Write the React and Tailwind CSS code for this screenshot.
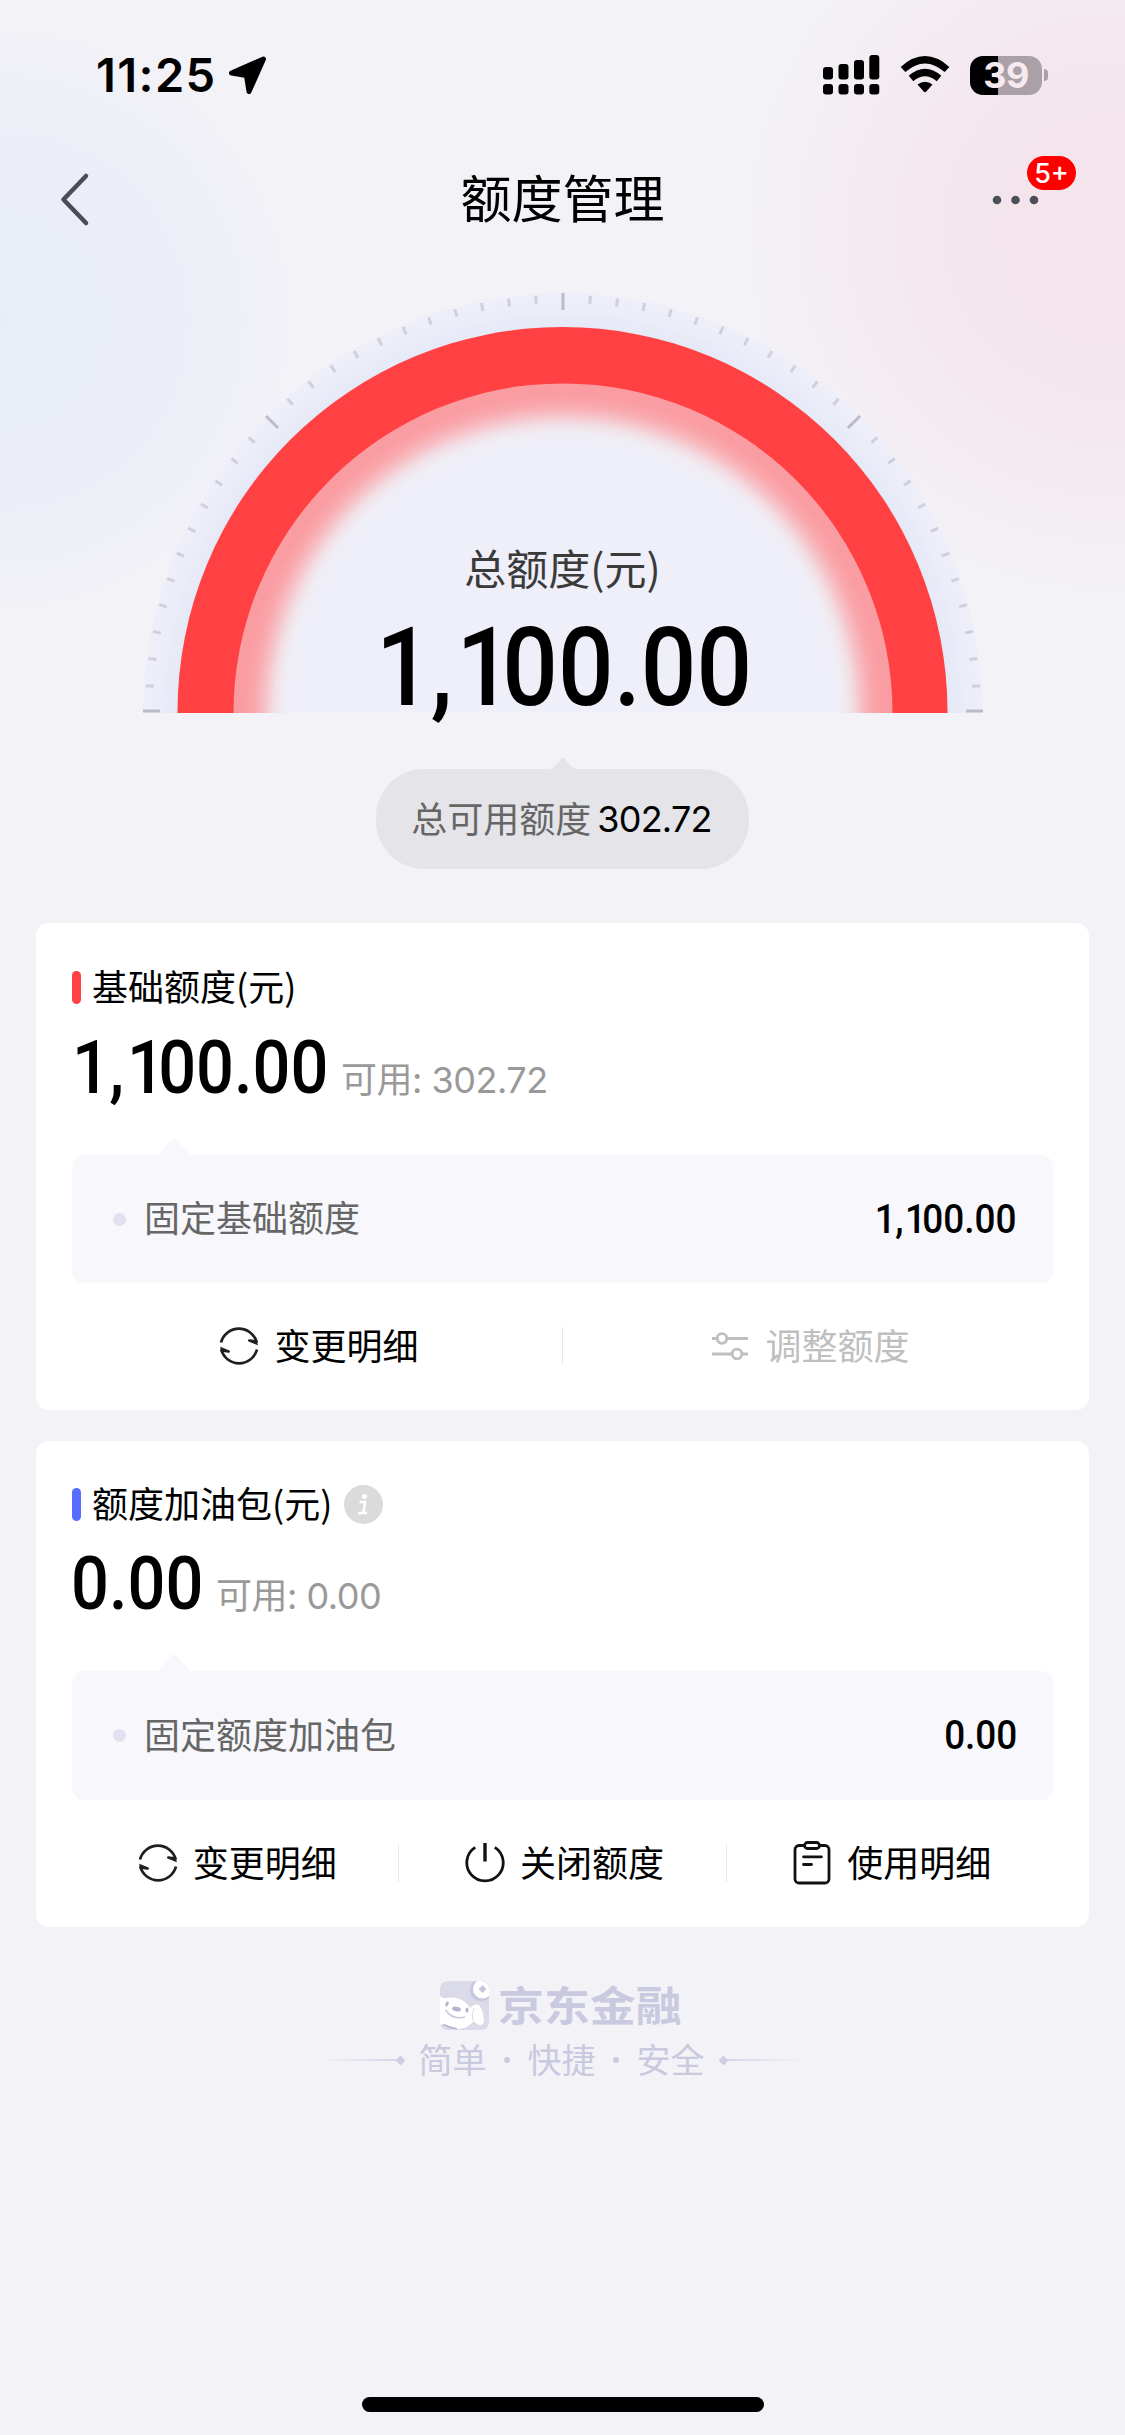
import React from 'react';

const CENTER_X = 420;
const CENTER_Y = 420;

// 49 ticks over the half circle, every 12th one is long
const ticks = Array.from({ length: 49 }, (_, i) => {
  const angle = (i * 3.75 * Math.PI) / 180;
  const major = i % 12 === 0;
  const outer = major ? 420 : 418;
  const inner = major ? 403 : 410;
  const shift = i === 0 || i === 48 ? -2 : 0;
  return {
    major,
    x1: CENTER_X - outer * Math.cos(angle),
    y1: CENTER_Y - outer * Math.sin(angle) + shift,
    x2: CENTER_X - inner * Math.cos(angle),
    y2: CENTER_Y - inner * Math.sin(angle) + shift,
  };
});

const RefreshIcon = () => (
  <svg width="40" height="42" viewBox="0 0 40 42" fill="none">
    <path d="M2 17.500A18.600 19 0 0 1 37.800 17.500" stroke="#1f1f1f" strokeWidth="2.800" />
    <path d="M38 24.500A18.600 19 0 0 1 2.200 24.500" stroke="#1f1f1f" strokeWidth="2.800" />
    <path d="M38.800 20.300L29.500 16.400c-1-.8-.4-2.400 1-2.200l7.500 1z" fill="#1f1f1f" />
    <path d="M1.200 21.700L10.500 25.600c1 .8 .4 2.400-1 2.200l-7.500-1z" fill="#1f1f1f" />
  </svg>
);

const AdjustIcon = () => (
  <svg width="40" height="40" viewBox="0 0 40 40" fill="none" stroke="#bfbfbf" strokeWidth="2.800">
    <path d="M2 12.500h5M17 12.500h21M2 28h20M32 28h6" />
    <circle cx="12" cy="12.500" r="4.800" />
    <circle cx="27" cy="28" r="4.800" />
  </svg>
);

const PowerIcon = () => (
  <svg width="40" height="40" viewBox="0 0 40 40" fill="none" stroke="#111" strokeWidth="2.800">
    <path d="M10.200 4.400A18.200 18.200 0 1 0 29.800 4.400" />
    <path d="M20 0v18.500" strokeWidth="3.400" />
  </svg>
);

const ClipboardIcon = () => (
  <svg width="40" height="44" viewBox="0 0 40 44" fill="none" stroke="#111" strokeWidth="2.800">
    <path d="M12 4.500H7a4 4 0 0 0-4 4v29.500a4 4 0 0 0 4 4h26a4 4 0 0 0 4-4V8.500a4 4 0 0 0-4-4h-5" />
    <rect x="12.500" y="1.500" width="15" height="6" rx="3" />
    <path d="M11.500 15.800h18M11.500 23.500h8" strokeLinecap="round" />
  </svg>
);

// Thousands part gets a wider comma and a tighter leading digit
const Amount = ({ value }) => {
  const [head, tail] = value.split(',');
  if (!tail) return value;
  return (
    <>
      {head}
      <span className="-ml-[0.01em] mr-[0.04em]">,</span>
      <span className="tracking-[-0.1em]">{tail[0]}</span>
      {tail.slice(1)}
    </>
  );
};

const StatusBar = () => (
  <div className="flex h-[150px] items-start justify-between pt-[55px] pl-[96px] pr-[77px]">
    <div className="flex items-center">
      <span className="w-[132px] font-[Inter] text-[47px] leading-[39px] font-semibold tracking-[1.4px] whitespace-nowrap">
        11:25
      </span>
      <svg width="38" height="38" viewBox="0 0 38 38">
        <path
          d="M35.500 3L21 35.500L18.500 19.500L3.500 17z"
          fill="#000"
          stroke="#000"
          strokeWidth="5"
          strokeLinejoin="round"
        />
      </svg>
    </div>
    <div className="flex items-center">
      <svg width="57" height="40" viewBox="0 0 57 40" fill="#000">
        <rect x="0" y="12" width="10" height="12.500" rx="3" />
        <rect x="15.500" y="9" width="10" height="15.500" rx="3" />
        <rect x="31" y="5" width="10" height="19.500" rx="3" />
        <rect x="46.300" y="0" width="10" height="24.500" rx="3" />
        <rect x="0" y="29" width="10" height="10.500" rx="3" />
        <rect x="15.500" y="29" width="10" height="10.500" rx="3" />
        <rect x="31" y="29" width="10" height="10.500" rx="3" />
        <rect x="46.300" y="29" width="10" height="10.500" rx="3" />
      </svg>
      <svg className="ml-[20px]" width="50" height="38" viewBox="0 0 50 38">
        <path d="M3 13.500Q25-6 47 13.500" fill="none" stroke="#000" strokeWidth="7" />
        <path d="M11 22.500Q25 10.500 39 22.500" fill="none" stroke="#000" strokeWidth="7" />
        <path d="M17.500 28.500Q25 23 32.500 28.500L26.500 35.300Q25 37 23.500 35.300z" fill="#000" />
      </svg>
      <div className="ml-[20px] flex h-[39px] w-[72px] items-center justify-center rounded-[13px] bg-linear-to-r from-black from-39% to-[#aaa0a7] to-39%">
        <span className="font-[Inter] text-[36px] leading-[39px] font-bold tracking-[-0.5px] text-[#f6eaf0]">
          39
        </span>
      </div>
      <div className="ml-[2px] h-[12px] w-[4px] rounded-r-full bg-[#aaa0a7]"></div>
    </div>
  </div>
);

const NavBar = () => (
  <div className="flex h-[100px] items-center justify-between pl-[59px] pr-[49px]">
    <svg className="w-[120px]" width="120" height="56" viewBox="0 0 120 56" fill="none">
      <path
        d="M27 4L4.500 27.500L27 51"
        stroke="#4a4c59"
        strokeWidth="4.500"
        strokeLinecap="round"
        strokeLinejoin="round"
      />
    </svg>
    <h1 className="pb-[8px] font-['Noto_Sans_CJK_SC',sans-serif] text-[51px] leading-[51px]">额度管理</h1>
    <div className="relative flex h-[56px] w-[130px] items-center">
      <svg width="80" height="10" viewBox="0 0 80 10" fill="#4c4f5a" className="ml-[30px]">
        <circle cx="21" cy="5" r="4.300" />
        <circle cx="39.500" cy="5" r="4.300" />
        <circle cx="58" cy="5" r="4.300" />
      </svg>
      <span className="absolute right-0 -top-[16px] flex h-[34px] w-[49px] items-center justify-center rounded-full bg-[#fe0000] font-[Inter] text-[27px] leading-none font-medium text-white">
        5+
      </span>
    </div>
  </div>
);

const Gauge = () => (
  <div className="relative mx-auto mt-[43px] h-[420px] w-[840px]">
    <svg className="absolute inset-0" width="840" height="420" viewBox="0 0 840 420">
      <defs>
        <radialGradient id="rim" gradientUnits="userSpaceOnUse" cx="420" cy="420" r="420">
          <stop offset="0.915" stopColor="#e5e9f6" />
          <stop offset="0.96" stopColor="#ebedf8" />
          <stop offset="1" stopColor="#efeff9" />
        </radialGradient>
        <radialGradient id="glow" gradientUnits="userSpaceOnUse" cx="420" cy="420" r="330">
          <stop offset="0.82" stopColor="#efeff9" />
          <stop offset="0.85" stopColor="#f0ecf3" />
          <stop offset="0.875" stopColor="#f2dfe5" />
          <stop offset="0.905" stopColor="#f6c0c6" />
          <stop offset="0.935" stopColor="#f9a8ad" />
          <stop offset="0.965" stopColor="#fa9da2" />
          <stop offset="1" stopColor="#fa9da2" />
        </radialGradient>
      </defs>
      <circle cx="420" cy="420" r="420" fill="url(#rim)" />
      <circle cx="419.500" cy="419" r="385" fill="#ff4143" />
      <circle cx="420" cy="420" r="329.500" fill="url(#glow)" />
      {ticks.map((t, i) => (
        <line
          key={i}
          x1={t.x1}
          y1={t.y1}
          x2={t.x2}
          y2={t.y2}
          stroke={t.major ? '#bcbcc8' : '#d0d0dc'}
          strokeWidth="3"
        />
      ))}
    </svg>
    <div className="relative flex flex-col pt-[252px]">
      <div className="self-center font-['Noto_Sans_CJK_SC',sans-serif] text-[42px] leading-[44px] text-[#3a3a3a]">
        总额度(元)
      </div>
      <div className="mt-[35px] ml-[233px] w-[420px] origin-left scale-x-[0.89] font-[Roboto] text-[110px] leading-[88px] font-medium">
        <Amount value="1,100.00" />
      </div>
    </div>
  </div>
);

const AvailablePill = () => (
  <div className="mt-[44px] flex flex-col items-center">
    <svg width="26" height="12" viewBox="0 0 26 12" fill="#e4e4e9">
      <path d="M0 12Q3 11 5 9L11.500 1.500Q13-.5 14.500 1.500L21 9Q23 11 26 12z" />
    </svg>
    <div className="flex h-[100px] w-[373px] items-center justify-center gap-[6px] rounded-[48px] bg-[#e4e4e9] pr-[2px] text-[36px] leading-[36px]">
      <span className="pb-[4px] font-['Noto_Sans_CJK_SC',sans-serif] text-[#666]">总可用额度</span>
      <span className="font-[Inter] tracking-[-0.8px]">302.72</span>
    </div>
  </div>
);

const QuotaCard = ({
  title,
  accent,
  info,
  amount,
  amountWidth,
  available,
  rowLabel,
  rowAmount,
  actions,
  headHeight,
  rowHeight,
  className,
}) => (
  <section className={`mx-[36px] rounded-[13px] bg-white px-[36px] ${className}`}>
    <div className={`flex items-center ${headHeight}`}>
      <span className={`h-[33px] w-[9px] rounded-full ${accent}`}></span>
      <h2 className="ml-[11px] pb-[4px] font-['Noto_Sans_CJK_SC',sans-serif] text-[36px] leading-[36px]">{title}</h2>
      {info && (
        <svg className="ml-[12px]" width="39" height="39" viewBox="0 0 39 39">
          <circle cx="19.500" cy="19.500" r="19.500" fill="#dbdbdb" />
          <circle cx="20.500" cy="11.500" r="2.600" fill="#fff" />
          <path d="M15.500 17h5.500L19.500 28M14 28h9" stroke="#fff" strokeWidth="2.600" fill="none" />
        </svg>
      )}
    </div>
    <div className="-mt-[21px] flex h-[75px] items-baseline">
      <span className={amountWidth}>
        <span className="inline-block origin-left scale-x-[0.89] font-[Roboto] text-[75px] leading-[75px] font-medium">
          <Amount value={amount} />
        </span>
      </span>
      <span className="font-[Inter,'Noto_Sans_CJK_SC',sans-serif] text-[36px] leading-[36px] tracking-[-0.5px] whitespace-nowrap text-[#999]">
        可用: {available}
      </span>
    </div>
    <svg className="mt-[33px] ml-[83px]" width="38" height="18" viewBox="0 0 38 18" fill="#f7f7fc">
      <path d="M0 18Q3 17 5 14.500L15 3Q19-1.500 23 3L33 14.500Q35 17 38 18z" />
    </svg>
    <div className={`-mt-px flex items-center rounded-[12px] bg-[#f7f7fc] pr-[36px] pl-[41px] ${rowHeight}`}>
      <span className="size-[13px] rounded-full bg-[#e1e1ef]"></span>
      <span className="ml-[18px] pb-[6px] font-['Noto_Sans_CJK_SC',sans-serif] text-[36px] leading-[36px] text-[#666]">
        {rowLabel}
      </span>
      <span className="ml-auto origin-right scale-x-[0.9] font-[Roboto] text-[41px] leading-[41px] font-medium">
        <Amount value={rowAmount} />
      </span>
    </div>
    <div className="flex h-[127px] items-center pb-[1px]">
      {actions.map(({ label, Icon, disabled }, index) => (
        <React.Fragment key={label}>
          {index > 0 && <span className="h-[38px] w-px bg-[#e6e6ee]"></span>}
          <button className="flex flex-1 items-center justify-center gap-[15px] pl-[4px]">
            <Icon />
            <span
              className={`pb-[5px] font-['Noto_Sans_CJK_SC',sans-serif] text-[36px] leading-[36px] ${
                disabled ? 'text-[#bfbfbf]' : 'text-black'
              }`}
            >
              {label}
            </span>
          </button>
        </React.Fragment>
      ))}
    </div>
  </section>
);

const Footer = () => (
  <footer className="flex flex-col items-center">
    <div className="mt-[54px] flex h-[49px] items-center">
      <svg width="49" height="49" viewBox="0 0 49 49">
        <defs>
          <clipPath id="logo">
            <rect width="49" height="49" rx="8" />
          </clipPath>
        </defs>
        <g clipPath="url(#logo)">
          <rect width="49" height="49" fill="#dadae8" />
          <circle cx="41" cy="9" r="11" fill="#c6c6dc" />
          <circle cx="42.500" cy="8" r="9.500" fill="#fff" />
          <path d="M42.500 4l4 4l-4 4l-4-4z" fill="#c6c6dc" />
          <path
            d="M0 15Q3 18 7 17C16 15 27 20 30 27Q34 22 39 24Q44 31 44 41Q42 46 37 43Q33 39 32 42C27 47 20 49 14 48L0 43z"
            fill="#fff"
          />
          <path d="M33 40Q31 33 34 27" stroke="#dadae8" strokeWidth="1" fill="none" />
          <ellipse cx="7" cy="23" rx="1.600" ry="2.600" fill="#b4b4cc" transform="rotate(20 7 23)" />
          <ellipse cx="27" cy="29" rx="1.500" ry="2.600" fill="#b4b4cc" />
          <ellipse cx="16.500" cy="28" rx="4.500" ry="2.400" fill="#b4b4cc" transform="rotate(12 16.500 28)" />
          <path d="M5.500 29Q12 39 25 36" stroke="#c6c6dc" strokeWidth="1.500" fill="none" />
          <path d="M3 43.500Q10 46.500 17 48" stroke="#b4b4cc" strokeWidth="1.500" fill="none" />
        </g>
      </svg>
      <span className="ml-[9px] w-[187px] pb-[4px] font-['Noto_Sans_CJK_SC',sans-serif] text-[41px] leading-[41px] font-bold whitespace-nowrap text-[#c9c9e0]">
        <span className="inline-block origin-left scale-x-[1.12]">京东金融</span>
      </span>
    </div>
    <div className="mt-[12px] flex h-[36px] items-center pr-[2px]">
      <span className="h-[2px] w-[76px] bg-linear-to-r from-transparent to-[#d6d6e8]"></span>
      <span className="size-[7px] rotate-45 bg-[#cdcde3]"></span>
      <span className="mx-[15px] flex items-center gap-[17.500px] font-['Noto_Sans_CJK_SC',sans-serif] text-[34px] leading-[36px] text-[#c9c9e0]">
        <span className="pb-[2px]">简单</span>
        <span className="size-[6px] rounded-full bg-[#c9c9e0]"></span>
        <span className="pb-[2px]">快捷</span>
        <span className="size-[6px] rounded-full bg-[#c9c9e0]"></span>
        <span className="pb-[2px]">安全</span>
      </span>
      <span className="size-[7px] rotate-45 bg-[#cdcde3]"></span>
      <span className="h-[2px] w-[76px] bg-linear-to-r from-[#d6d6e8] to-transparent"></span>
    </div>
  </footer>
);

const App = () => {
  return (
    <div className="flex h-[2435px] w-[1125px] flex-col overflow-hidden bg-[#f3f2f7] bg-[radial-gradient(circle_at_0px_320px,#e8eef8_0px,#ebeef8_150px,#f3f2f700_310px),radial-gradient(circle_at_1110px_230px,#f4e4ec_0px,#f4e6ee_160px,#f3f2f700_370px)] text-black">
      <StatusBar />
      <NavBar />
      <Gauge />
      <AvailablePill />
      <QuotaCard
        className="mt-[54px] h-[487px]"
        headHeight="h-[128px]"
        rowHeight="h-[128px]"
        title="基础额度(元)"
        accent="bg-[#ff4143]"
        amount="1,100.00"
        amountWidth="w-[269px]"
        available="302.72"
        rowLabel="固定基础额度"
        rowAmount="1,100.00"
        actions={[
          { label: '变更明细', Icon: RefreshIcon },
          { label: '调整额度', Icon: AdjustIcon, disabled: true },
        ]}
      />
      <QuotaCard
        className="mt-[31px] h-[486px]"
        headHeight="h-[126px]"
        rowHeight="h-[129px]"
        title="额度加油包(元)"
        accent="bg-[#566dff]"
        info
        amount="0.00"
        amountWidth="-ml-[1px] w-[145px]"
        available="0.00"
        rowLabel="固定额度加油包"
        rowAmount="0.00"
        actions={[
          { label: '变更明细', Icon: RefreshIcon },
          { label: '关闭额度', Icon: PowerIcon },
          { label: '使用明细', Icon: ClipboardIcon },
        ]}
      />
      <Footer />
      <div className="mx-auto mt-auto mb-[23px] h-[15px] w-[402px] rounded-full bg-black"></div>
    </div>
  );
};

export default App;
